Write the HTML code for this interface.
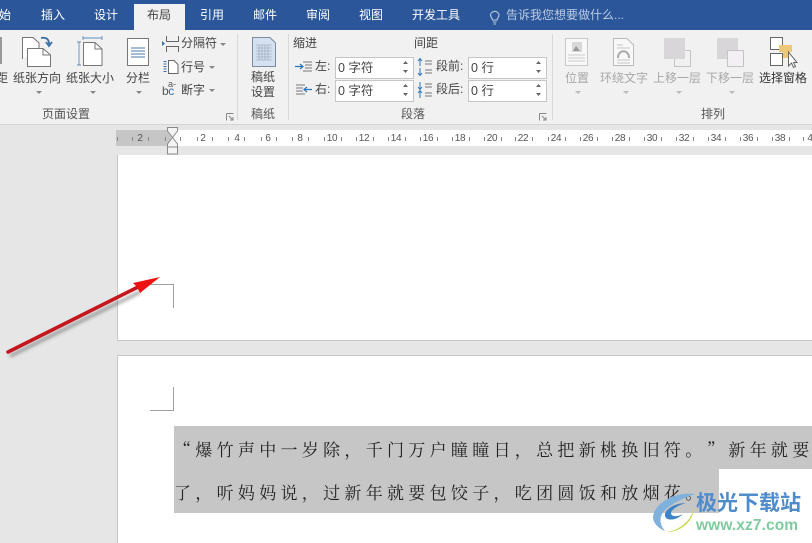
<!DOCTYPE html>
<html><head><meta charset="utf-8">
<style>
html,body{margin:0;padding:0}
body{width:812px;height:542px;overflow:hidden;position:relative;background:#e6e6e6;font-family:"Liberation Sans","Noto Sans CJK SC",sans-serif;font-size:12px;line-height:15px;color:#444}
.a{position:absolute;white-space:nowrap}
.t{position:absolute;top:8px;color:#fff;font-size:12px;white-space:nowrap;line-height:15px}
.g{color:#a8a8a8}
.c{text-align:center}
.sp{position:absolute;background:#fff;border:1px solid #c6c6c6;height:20px;line-height:20px;box-sizing:content-box;padding-left:2px;font-size:12.5px;color:#444}
.r{position:absolute;top:133px;width:20px;text-align:center;font:10px/11px "Liberation Sans",sans-serif;letter-spacing:-.3px;color:#555;white-space:nowrap}
.v{position:absolute;width:1px;height:4px;top:137px;background:#888}
.dd{position:absolute;width:0;height:0;border-left:3px solid transparent;border-right:3px solid transparent;border-top:3px solid #888}
.dg{border-top-color:#bbb}
.line{position:absolute;left:174px;font-family:"Noto Serif CJK SC","Liberation Serif",serif;font-size:17px;letter-spacing:4.3px;color:#222;white-space:nowrap;line-height:22px}
</style></head><body>
<div class="a" style="left:0;top:0;width:812px;height:30px;background:#2b579a"></div>
<div class="a" style="left:134px;top:4px;width:51px;height:26px;background:#f1f1f1"></div>
<div class="t" style="left:-1px">始</div>
<div class="t" style="left:41px">插入</div>
<div class="t" style="left:94px">设计</div>
<div class="t" style="left:147px;color:#444">布局</div>
<div class="t" style="left:200px">引用</div>
<div class="t" style="left:253px">邮件</div>
<div class="t" style="left:306px">审阅</div>
<div class="t" style="left:359px">视图</div>
<div class="t" style="left:412px">开发工具</div>
<svg class="a" style="left:489px;top:10px" width="12" height="15" viewBox="0 0 12 15"><path d="M3.5 10C3.5 8 1.500 7.500 1.500 5A4.300 4.300 0 0 1 10 5C10 7.500 8 8 8 10ZM4 12H7.500M4.500 14H7" fill="none" stroke="#b9c9e2" stroke-width="1.100"/></svg>
<div class="t" style="left:506px;color:#bccbe3">告诉我您想要做什么...</div>

<div class="a" style="left:0;top:30px;width:812px;height:94px;background:#f1f1f1;border-bottom:1px solid #d4d4d4"></div>

<!-- separators -->
<div class="a" style="left:237px;top:34px;width:1px;height:86px;background:#d8d8d8"></div>
<div class="a" style="left:288px;top:34px;width:1px;height:86px;background:#d8d8d8"></div>
<div class="a" style="left:552px;top:34px;width:1px;height:86px;background:#d8d8d8"></div>

<!-- page setup -->
<div class="a" style="left:-4px;top:71px">距</div>
<div class="a" style="left:0;top:37px;width:2px;height:27px;background:#999"></div>
<svg class="a" style="left:20px;top:36px" width="34" height="32" viewBox="0 0 34 32"><path d="M2.500 23V1.500H13L19 7V12" fill="#fff" stroke="#777"/><path d="M7.500 12.500H23L30.500 19V30.500H7.500Z" fill="#fff" stroke="#777"/><path d="M23 12.500V19H30.500" fill="none" stroke="#777"/><path d="M21 2C26 1 29 3 29 8M26 6L29 10L32 6" fill="none" stroke="#3a6ea5" stroke-width="1.800"/></svg>
<svg class="a" style="left:77px;top:36px" width="26" height="32" viewBox="0 0 26 32"><path d="M2 6V29M0 6H4M0 29H4M6 2H25M6 0V4M25 0V4" stroke="#5f8dba" fill="none" stroke-width=".9"/><path d="M6.500 6.500H18L25 13V29.500H6.500Z" fill="#fff" stroke="#777"/><path d="M18 6.500V13H25" fill="none" stroke="#777"/></svg>
<svg class="a" style="left:126px;top:38px" width="24" height="29" viewBox="0 0 24 29"><rect x="1.500" y=".5" width="21" height="27" fill="#fff" stroke="#777"/><path d="M5 10H19M5 13H19M5 16H19M5 19H19" stroke="#4a7bab"/></svg>
<div class="a c" style="left:13px;top:71px;width:48px">纸张方向</div>
<div class="a c" style="left:66px;top:71px;width:48px">纸张大小</div>
<div class="a c" style="left:124px;top:71px;width:28px">分栏</div>
<div class="dd" style="left:36px;top:91px"></div>
<div class="dd" style="left:90px;top:91px"></div>
<div class="dd" style="left:136px;top:91px"></div>
<svg class="a" style="left:161px;top:35px" width="18" height="18" viewBox="0 0 18 18"><path d="M5.500 1V6.500H17.500V1M5.500 17V11.500H17.500V17" fill="none" stroke="#666"/><path d="M1 6L4 8.500L1 11Z" fill="#3a6ea5"/></svg>
<div class="a" style="left:181px;top:36px">分隔符</div><div class="dd" style="left:220px;top:43px"></div>
<svg class="a" style="left:162px;top:59px" width="18" height="16" viewBox="0 0 18 16"><path d="M3 2V14" stroke="#3a6ea5" stroke-width="3" stroke-dasharray="1 1.500"/><path d="M6.500 1.500H12L16 5.500V14.500H6.500Z" fill="#fff" stroke="#666"/></svg>
<div class="a" style="left:181px;top:60px">行号</div><div class="dd" style="left:209px;top:66px"></div>
<div class="a" style="left:162px;top:85px;font:12px/13px 'Liberation Sans',sans-serif;color:#555;letter-spacing:-.5px">b<span style="color:#3a6ea5">c</span></div>
<div class="a" style="left:168px;top:80px;font:9px/9px 'Liberation Sans',sans-serif;color:#555">a-</div>
<div class="a" style="left:181px;top:83px">断字</div><div class="dd" style="left:209px;top:89px"></div>
<div class="a c" style="left:30px;top:107px;width:72px;color:#555">页面设置</div>
<svg class="a" style="left:226px;top:113px" width="8" height="8" viewBox="0 0 8 8"><path d="M.5 .5H7.500M.5 .5V7.500M3 3L7 7M7 4V7H4" fill="none" stroke="#888"/></svg>

<!-- 稿纸 -->
<svg class="a" style="left:252px;top:37px" width="24" height="30" viewBox="0 0 24 30"><path d="M.5 .5H18L23.500 6V29.500H.5Z" fill="#d5e0f0" stroke="#7d8ca0"/><path d="M4 8H20M4 11H20M4 14H20M4 17H20M4 20H20M4 23H20M7 8V23M10 8V23M13 8V23M16 8V23" stroke="#8b9bb0" stroke-width=".6"/></svg>
<div class="a c" style="left:249px;top:70px;width:28px;line-height:15px;white-space:normal">稿纸<br>设置</div>
<div class="a c" style="left:249px;top:107px;width:28px;color:#555">稿纸</div>

<!-- paragraph -->
<div class="a" style="left:293px;top:36px">缩进</div>
<div class="a" style="left:414px;top:36px">间距</div>
<svg class="a" style="left:295px;top:60px" width="18" height="14" viewBox="0 0 18 14"><path d="M8 2H17M10 5H17M10 8H17M8 11H17" stroke="#777"/><path d="M0 6.500H7M5 4L8 6.500L5 9" stroke="#2e75b6" fill="none" stroke-width="1.200"/></svg>
<svg class="a" style="left:295px;top:83px" width="18" height="14" viewBox="0 0 18 14"><path d="M1 2H10M1 5H8M1 8H8M1 11H10" stroke="#777"/><path d="M17 6.500H10M12 4L9 6.500L12 9" stroke="#2e75b6" fill="none" stroke-width="1.200"/></svg>
<div class="a" style="left:315px;top:59px">左:</div>
<div class="a" style="left:315px;top:82px">右:</div>
<div class="sp" style="left:335px;top:57px;width:75px">0 字符</div>
<div class="sp" style="left:335px;top:80px;width:75px">0 字符</div>
<svg class="a" style="left:417px;top:58px" width="16" height="18" viewBox="0 0 16 18"><path d="M3 1V8M1 3L3 .5L5 3M3 10V17M1 15L3 17.500L5 15" stroke="#2e75b6" fill="none"/><path d="M8 3H15M8 6H15M8 12H15M8 15H15" stroke="#777"/></svg>
<svg class="a" style="left:417px;top:81px" width="16" height="18" viewBox="0 0 16 18"><path d="M3 1V8M1 6L3 8.500L5 6M3 10V17M1 12L3 9.500L5 12" stroke="#2e75b6" fill="none"/><path d="M8 3H15M8 6H15M8 12H15M8 15H15" stroke="#777"/></svg>
<div class="a" style="left:436px;top:59px">段前:</div>
<div class="a" style="left:436px;top:82px">段后:</div>
<div class="sp" style="left:468px;top:57px;width:75px">0 行</div>
<div class="sp" style="left:468px;top:80px;width:75px">0 行</div>
<svg class="a" style="left:402px;top:60px" width="7" height="14" viewBox="0 0 7 14"><path d="M1 4L3.500 1L6 4ZM1 10L3.500 13L6 10Z" fill="#666"/></svg>
<svg class="a" style="left:402px;top:83px" width="7" height="14" viewBox="0 0 7 14"><path d="M1 4L3.500 1L6 4ZM1 10L3.500 13L6 10Z" fill="#666"/></svg>
<svg class="a" style="left:535px;top:60px" width="7" height="14" viewBox="0 0 7 14"><path d="M1 4L3.500 1L6 4ZM1 10L3.500 13L6 10Z" fill="#666"/></svg>
<svg class="a" style="left:535px;top:83px" width="7" height="14" viewBox="0 0 7 14"><path d="M1 4L3.500 1L6 4ZM1 10L3.500 13L6 10Z" fill="#666"/></svg>
<div class="a c" style="left:390px;top:107px;width:46px;color:#555">段落</div>
<svg class="a" style="left:539px;top:113px" width="8" height="8" viewBox="0 0 8 8"><path d="M.5 .5H7.500M.5 .5V7.500M3 3L7 7M7 4V7H4" fill="none" stroke="#888"/></svg>

<!-- arrange -->
<svg class="a" style="left:565px;top:38px" width="24" height="28" viewBox="0 0 24 28"><rect x=".5" y=".5" width="22" height="27" fill="#f8f8f8" stroke="#c8c8c8"/><rect x="7" y="4" width="10" height="10" fill="#d8d8d8"/><path d="M8 13L11 8L15 13Z" fill="#999"/><path d="M3 17H20M3 20H20M3 23H20" stroke="#ccc"/></svg>
<svg class="a" style="left:613px;top:38px" width="22" height="28" viewBox="0 0 22 28"><path d="M.5 .5H14L20.500 7V27.500H.5Z" fill="#f8f8f8" stroke="#bbb"/><path d="M4 7H10M4 10H17M4 22H17M4 25H17" stroke="#c4c4c4"/><path d="M5 20C5 11 16 11 16 20" stroke="#aaa" stroke-width="2" fill="none"/></svg>
<div class="a" style="left:674px;top:50px;width:15px;height:15px;border:1px solid #c4c4c4;background:#f1f1f1"></div>
<div class="a" style="left:664px;top:38px;width:21px;height:21px;background:#d9d6da"></div>
<div class="a" style="left:717px;top:38px;width:21px;height:21px;background:#d9d6da"></div>
<div class="a" style="left:727px;top:50px;width:15px;height:15px;border:1px solid #c4c4c4;background:#f3f0f3"></div>
<svg class="a" style="left:769px;top:36px" width="30" height="33" viewBox="0 0 30 33"><rect x="1.500" y="1.500" width="12" height="12" fill="#fff" stroke="#666"/><rect x="1.500" y="17.500" width="12" height="12" fill="#fff" stroke="#666"/><path d="M10 9H23V16H19V22H14V16H10Z" fill="#edc67a"/><path d="M19.500 16V30L22.500 27L24.500 31.500L26.500 30.500L24.500 26.500H28Z" fill="#fff" stroke="#666"/></svg>
<div class="a c g" style="left:560px;top:71px;width:34px">位置</div>
<div class="a c g" style="left:599px;top:71px;width:50px">环绕文字</div>
<div class="a c g" style="left:652px;top:71px;width:50px">上移一层</div>
<div class="a c g" style="left:705px;top:71px;width:50px">下移一层</div>
<div class="a c" style="left:758px;top:71px;width:50px;color:#333">选择窗格</div>
<div class="dd dg" style="left:575px;top:91px"></div>
<div class="dd dg" style="left:623px;top:91px"></div>
<div class="dd dg" style="left:676px;top:91px"></div>
<div class="dd dg" style="left:729px;top:91px"></div>
<div class="a c" style="left:690px;top:107px;width:46px;color:#555">排列</div>

<!-- ruler -->
<div class="a" style="left:116px;top:130px;width:696px;height:16px;background:#fff"></div>
<div class="a" style="left:116px;top:130px;width:55px;height:16px;background:#c6c6c6"></div>
<div class="r" style="left:130px">2</div>
<div class="r" style="left:193px">2</div>
<div class="r" style="left:227px">4</div>
<div class="r" style="left:258px">6</div>
<div class="r" style="left:290px">8</div>
<div class="r" style="left:322px">10</div>
<div class="r" style="left:354px">12</div>
<div class="r" style="left:386px">14</div>
<div class="r" style="left:418px">16</div>
<div class="r" style="left:450px">18</div>
<div class="r" style="left:482px">20</div>
<div class="r" style="left:513px">22</div>
<div class="r" style="left:546px">24</div>
<div class="r" style="left:578px">26</div>
<div class="r" style="left:610px">28</div>
<div class="r" style="left:642px">30</div>
<div class="r" style="left:674px">32</div>
<div class="r" style="left:706px">34</div>
<div class="r" style="left:738px">36</div>
<div class="r" style="left:770px">38</div>
<div class="r" style="left:800px">4</div>
<div class="v" style="left:117px"></div><div class="v" style="left:132px"></div><div class="v" style="left:148px"></div><div class="v" style="left:165px"></div>
<div class="v" style="left:180px"></div><div class="v" style="left:197px"></div><div class="v" style="left:212px"></div><div class="v" style="left:228px"></div><div class="v" style="left:244px"></div><div class="v" style="left:261px"></div><div class="v" style="left:276px"></div><div class="v" style="left:292px"></div><div class="v" style="left:308px"></div><div class="v" style="left:324px"></div><div class="v" style="left:341px"></div><div class="v" style="left:356px"></div><div class="v" style="left:373px"></div><div class="v" style="left:388px"></div><div class="v" style="left:405px"></div><div class="v" style="left:420px"></div><div class="v" style="left:437px"></div><div class="v" style="left:452px"></div><div class="v" style="left:469px"></div><div class="v" style="left:484px"></div><div class="v" style="left:501px"></div><div class="v" style="left:515px"></div><div class="v" style="left:532px"></div><div class="v" style="left:548px"></div><div class="v" style="left:565px"></div><div class="v" style="left:580px"></div><div class="v" style="left:597px"></div><div class="v" style="left:612px"></div><div class="v" style="left:629px"></div><div class="v" style="left:644px"></div><div class="v" style="left:661px"></div><div class="v" style="left:676px"></div><div class="v" style="left:693px"></div><div class="v" style="left:708px"></div><div class="v" style="left:725px"></div><div class="v" style="left:740px"></div><div class="v" style="left:757px"></div><div class="v" style="left:772px"></div><div class="v" style="left:789px"></div><div class="v" style="left:803px"></div>
<svg class="a" style="left:166px;top:127px" width="13" height="28" viewBox="0 0 13 28"><path d="M1.500 .5H11.500V4L6.500 10.500L1.500 4Z" fill="#f4f4f4" stroke="#8a8a8a"/><path d="M6.500 10.500L11.500 17V20H1.500V17Z" fill="#f4f4f4" stroke="#8a8a8a"/><rect x="1.500" y="20" width="10" height="7" fill="#f4f4f4" stroke="#8a8a8a"/></svg>

<!-- pages -->
<div class="a" style="left:117px;top:155px;width:695px;height:185px;background:#fff;border-left:1px solid #c6c6c6;border-bottom:1px solid #c6c6c6"></div>
<div class="a" style="left:117px;top:355px;width:695px;height:187px;background:#fff;border-left:1px solid #c6c6c6;border-top:1px solid #c6c6c6"></div>
<div class="a" style="left:150px;top:284px;width:23px;height:23px;border-top:1px solid #a0a0a0;border-right:1px solid #a0a0a0"></div>
<div class="a" style="left:150px;top:387px;width:23px;height:23px;border-bottom:1px solid #a0a0a0;border-right:1px solid #a0a0a0"></div>

<!-- selection -->
<div class="a" style="left:174px;top:426px;width:638px;height:43px;background:#c6c6c6"></div>
<div class="a" style="left:174px;top:469px;width:545px;height:44px;background:#c6c6c6"></div>
<div class="line" style="top:438px;left:174px">“爆竹声中一岁除，千门万户瞳瞳日，总把新桃换旧符。<span style="margin-left:9px">”</span>新年就要</div>
<div class="line" style="top:481px;left:174px">了，听妈妈说，过新年就要包饺子，吃团圆饭和放烟花。</div>

<!-- arrow -->
<svg class="a" style="left:0;top:270px" width="170" height="90" viewBox="0 0 170 90">
<defs><filter id="s" x="-20%" y="-40%" width="140%" height="180%"><feGaussianBlur stdDeviation="1.500"/></filter></defs>
<path d="M8 83L138 19" stroke="#555" stroke-opacity=".5" stroke-width="3.500" filter="url(#s)" transform="translate(2,3)"/>
<path d="M8 82L138 17" stroke="#c4161c" stroke-width="3.500" stroke-linecap="round"/>
<path d="M160 7L133 13L137 17L140 23Z" fill="#ee1111"/>
</svg>

<!-- watermark -->
<svg class="a" style="left:650px;top:490px" width="50" height="44" viewBox="0 0 50 44">
<path d="M45 4C24 1 4 14 3 27C3 34 10 39 15 41C9 34 9 26 15 20C22 13 34 8 45 4Z" fill="#7fb1dc"/>
<path d="M36 13C24 13 14 20 15 26C16 31 26 31 33 24C28 27 21 27 21 23C21 20 28 15 36 13Z" fill="#3d84c6"/>
<path d="M15 42C30 41 42 30 44 17C44 28 36 38 24 41C20 42 18 42 15 42Z" fill="#c7d94e"/>
</svg>
<div class="a" style="left:696px;top:491px;font:bold 21px/25px 'Liberation Sans','Noto Sans CJK SC',sans-serif;color:#4f8ccb">极光下载站</div>
<div class="a" style="left:696px;top:517px;font:bold 15.5px/18px 'Liberation Sans',sans-serif;color:#7fcb9f;letter-spacing:.1px">www.xz7.com</div>
</body></html>
